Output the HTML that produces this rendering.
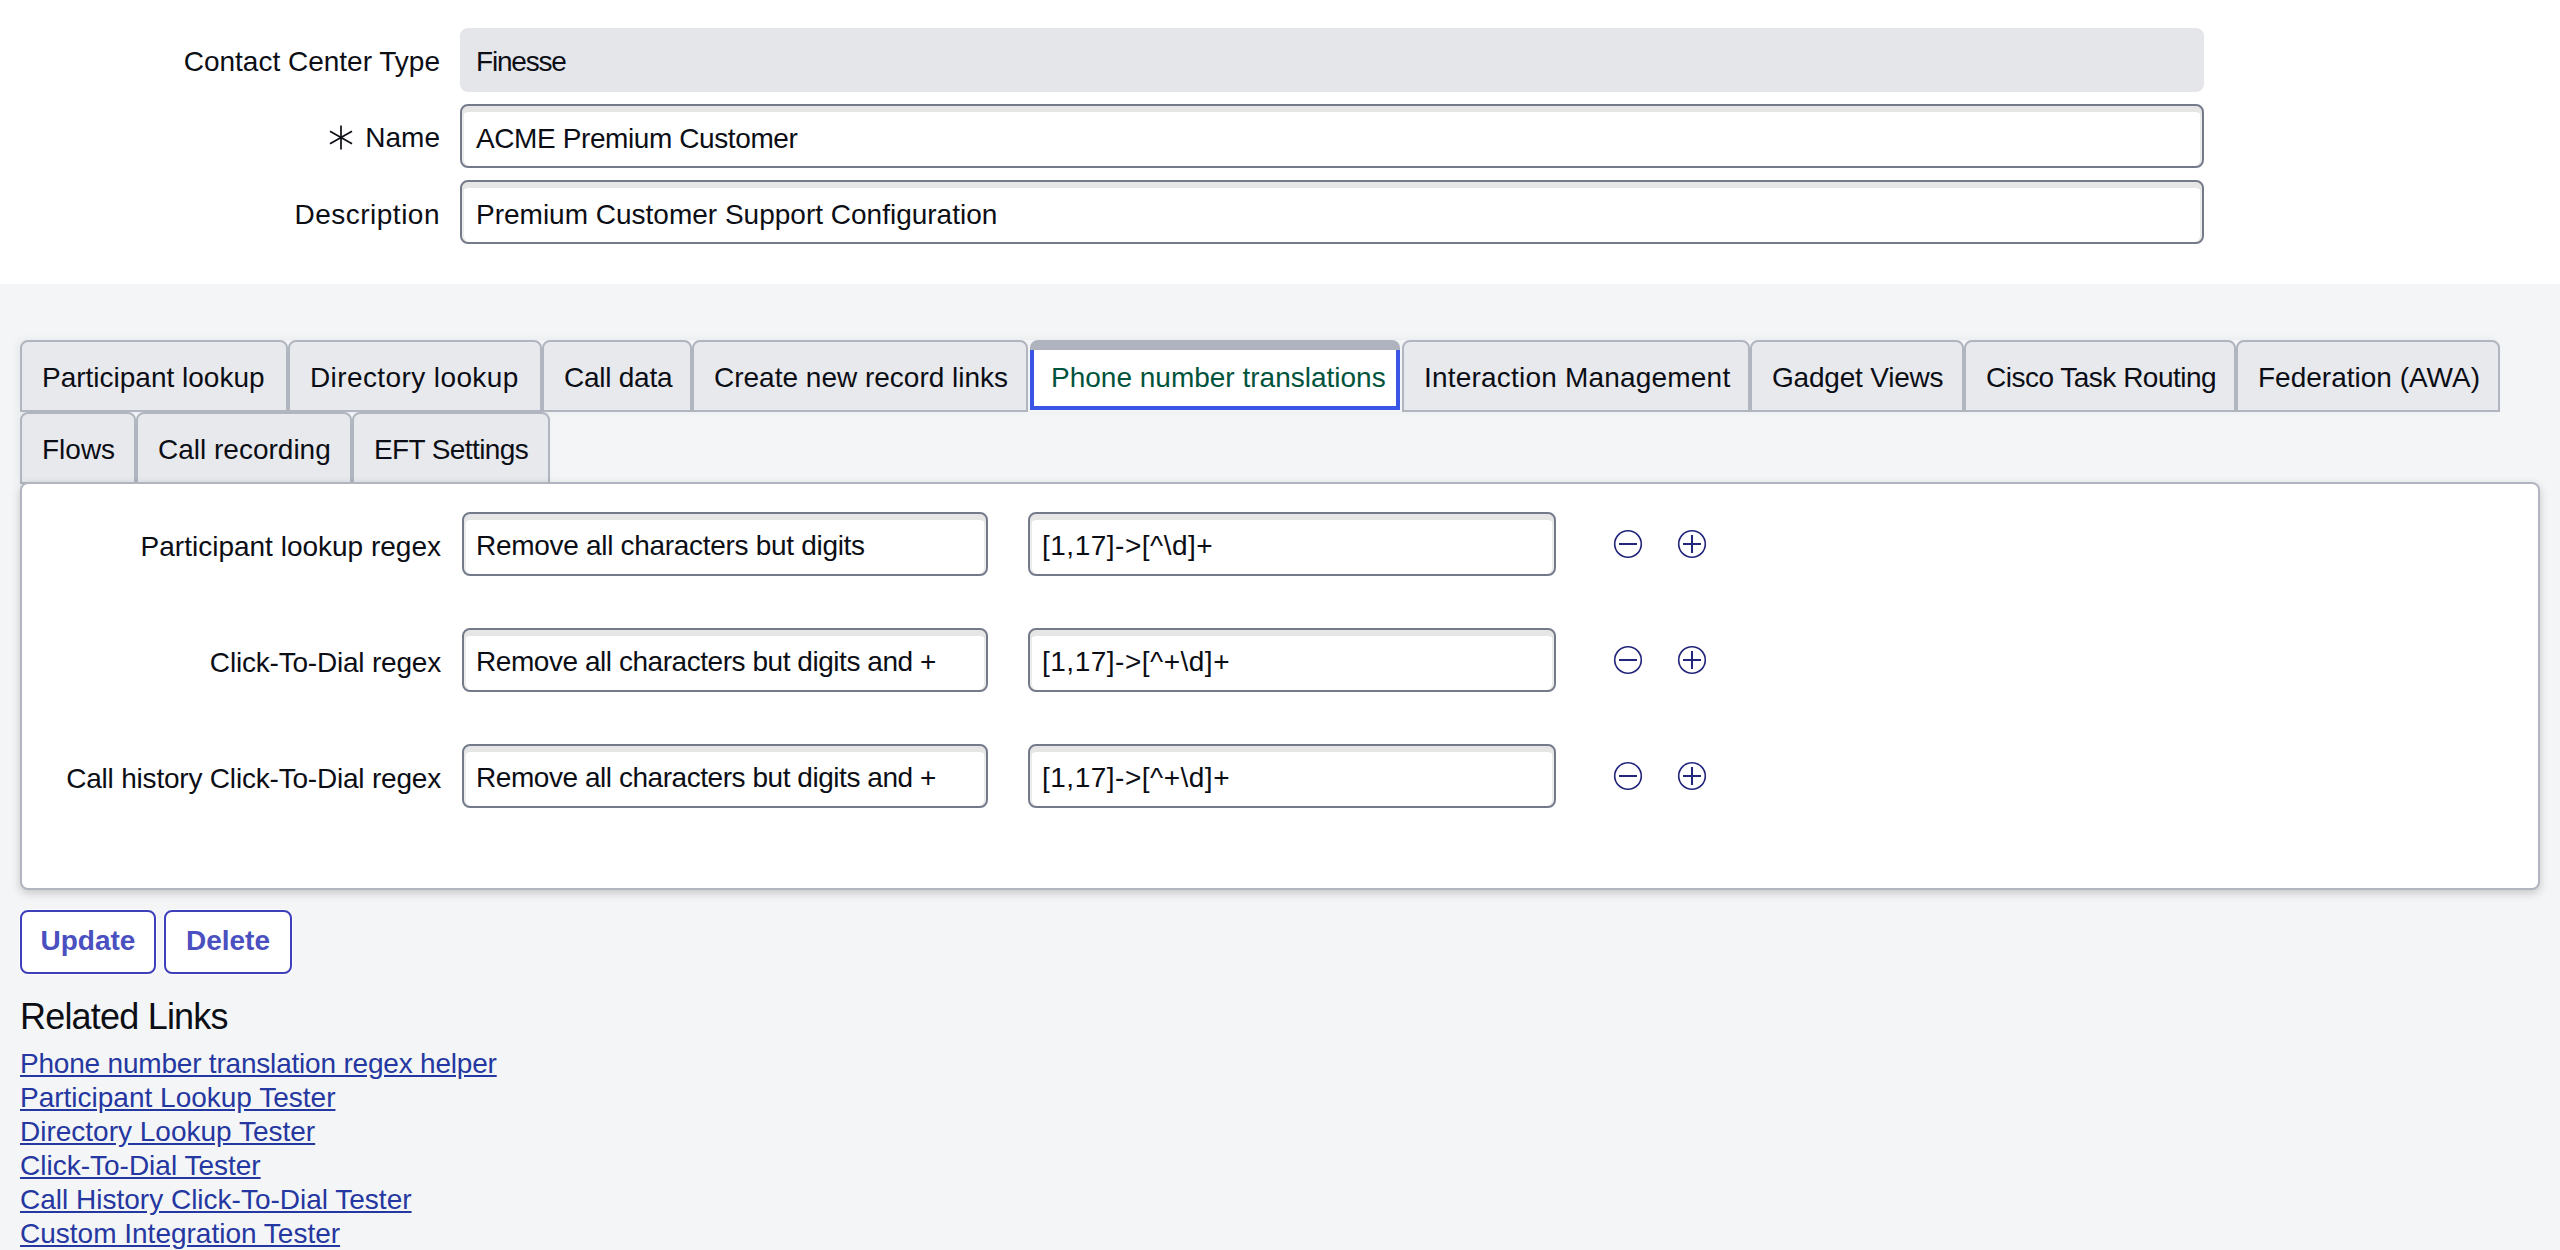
<!DOCTYPE html>
<html>
<head>
<meta charset="utf-8">
<style>
*{box-sizing:border-box;margin:0;padding:0}
html,body{width:2560px;height:1250px;overflow:hidden}
body{background:#f4f5f7;font-family:"Liberation Sans",sans-serif;font-size:28px;color:#0c0e15;position:relative}
.top{position:absolute;left:0;top:0;width:2560px;height:284px;background:#fff}
.lbl{position:absolute;right:0;white-space:nowrap;line-height:32px}
.inp{position:absolute;border:2px solid #737b8a;border-radius:8px;background:#fff;box-shadow:inset 0 6px 0 #e6e6e6,inset 2px 0 0 #ececec,inset -2px 0 0 #ececec;white-space:nowrap;line-height:32px}
.ro{position:absolute;background:#e5e6ea;border-radius:8px;white-space:nowrap;line-height:32px}
.tab{position:absolute;background:#e8e9ed;border:2px solid #b0b5bf;border-bottom:2px solid #b0b5bf;border-radius:8px 8px 0 0;white-space:nowrap;line-height:32px}
.panel{position:absolute;left:20px;top:482px;width:2520px;height:408px;background:#fff;border:2px solid #b0b5bf;border-radius:8px;box-shadow:0 3px 10px rgba(0,0,0,0.2)}
.ico{position:absolute;width:30px;height:30px}
.btn{position:absolute;border:2px solid #3d40b8;border-radius:8px;background:#fff;color:#4a50c0;box-shadow:0 0 0 1px #fff;font-weight:bold;white-space:nowrap;line-height:32px;text-align:center}
.h{position:absolute;left:20px;white-space:nowrap;font-size:36px;letter-spacing:-0.8px;line-height:40px;color:#0c0e15}
.lnk{position:absolute;left:20px;white-space:nowrap;color:#2537a0;text-decoration:underline;line-height:34px}
</style>
</head>
<body>
<div class="top"></div>

<!-- header fields -->
<div class="lbl" style="left:0;width:440px;top:46px;text-align:right">Contact Center Type</div>
<div class="ro" style="left:460px;top:28px;width:1744px;height:64px;padding:18px 0 0 16px;letter-spacing:-1.2px">Finesse</div>

<svg style="position:absolute;left:328px;top:124px" width="26" height="27" viewBox="0 0 26 27"><g stroke="#0c0e15" stroke-width="1.7"><line x1="13" y1="1.5" x2="13" y2="25.5"/><line x1="2" y1="7.2" x2="24" y2="19.8"/><line x1="2" y1="19.8" x2="24" y2="7.2"/></g></svg>
<div class="lbl" style="left:0;width:440px;top:122px;text-align:right">Name</div>
<div class="inp" style="left:460px;top:104px;width:1744px;height:64px;padding:17px 0 0 14px;letter-spacing:-0.4px">ACME Premium Customer</div>

<div class="lbl" style="left:0;width:440px;top:199px;text-align:right;letter-spacing:0.5px">Description</div>
<div class="inp" style="left:460px;top:180px;width:1744px;height:64px;padding:17px 0 0 14px">Premium Customer Support Configuration</div>

<div style="position:absolute;left:20px;top:340px;width:2480px;height:72px;border-radius:8px 8px 0 0;box-shadow:-3px -1px 8px rgba(0,0,0,0.05)"></div>
<div style="position:absolute;left:20px;top:412px;width:530px;height:72px;border-radius:8px 8px 0 0;box-shadow:-3px -1px 8px rgba(0,0,0,0.05)"></div>
<!-- tabs row 1 -->
<div class="tab" style="left:20px;top:340px;width:268px;height:72px;padding:20px 0 0 20px">Participant lookup</div>
<div class="tab" style="left:288px;top:340px;width:254px;height:72px;padding:20px 0 0 20px;letter-spacing:0.4px">Directory lookup</div>
<div class="tab" style="left:542px;top:340px;width:150px;height:72px;padding:20px 0 0 20px;letter-spacing:-0.25px">Call data</div>
<div class="tab" style="left:692px;top:340px;width:336px;height:72px;padding:20px 0 0 20px">Create new record links</div>
<div style="position:absolute;left:1030px;top:340px;width:370px;height:70px;background:#aeb3bd;border-radius:8px 8px 0 0"></div>
<div style="position:absolute;left:1030px;top:350px;width:370px;height:60px;background:#fff;border:4px solid #3b56e6;border-top:0"></div>
<div class="lbl" style="left:1051px;top:362px;color:#00543b">Phone number translations</div>
<div class="tab" style="left:1402px;top:340px;width:348px;height:72px;padding:20px 0 0 20px;letter-spacing:0.2px">Interaction Management</div>
<div class="tab" style="left:1750px;top:340px;width:214px;height:72px;padding:20px 0 0 20px;letter-spacing:-0.2px">Gadget Views</div>
<div class="tab" style="left:1964px;top:340px;width:272px;height:72px;padding:20px 0 0 20px;letter-spacing:-0.5px">Cisco Task Routing</div>
<div class="tab" style="left:2236px;top:340px;width:264px;height:72px;padding:20px 0 0 20px">Federation (AWA)</div>

<!-- tabs row 2 -->
<div class="tab" style="left:20px;top:412px;width:116px;height:72px;padding:20px 0 0 20px">Flows</div>
<div class="tab" style="left:136px;top:412px;width:216px;height:72px;padding:20px 0 0 20px">Call recording</div>
<div class="tab" style="left:352px;top:412px;width:198px;height:72px;padding:20px 0 0 20px;letter-spacing:-0.6px">EFT Settings</div>

<div class="panel"></div>


<!-- panel rows -->
<div class="lbl" style="left:0;width:441px;top:531px;text-align:right">Participant lookup regex</div>
<div class="inp" style="left:462px;top:512px;width:526px;height:64px;padding:16px 0 0 12px;letter-spacing:-0.3px">Remove all characters but digits</div>
<div class="inp" style="left:1028px;top:512px;width:528px;height:64px;padding:16px 0 0 12px;letter-spacing:0.5px">[1,17]-&gt;[^\d]+</div>
<svg class="ico" style="left:1613px;top:529px" viewBox="0 0 30 30"><circle cx="15" cy="15" r="13.3" fill="none" stroke="#22257a" stroke-width="1.6"/><line x1="6" y1="15" x2="24" y2="15" stroke="#22257a" stroke-width="2"/></svg>
<svg class="ico" style="left:1677px;top:529px" viewBox="0 0 30 30"><circle cx="15" cy="15" r="13.3" fill="none" stroke="#22257a" stroke-width="1.6"/><line x1="6" y1="15" x2="24" y2="15" stroke="#22257a" stroke-width="2"/><line x1="15" y1="6" x2="15" y2="24" stroke="#22257a" stroke-width="2"/></svg>

<div class="lbl" style="left:0;width:441px;top:647px;text-align:right;letter-spacing:-0.2px">Click-To-Dial regex</div>
<div class="inp" style="left:462px;top:628px;width:526px;height:64px;padding:16px 0 0 12px;letter-spacing:-0.45px">Remove all characters but digits and +</div>
<div class="inp" style="left:1028px;top:628px;width:528px;height:64px;padding:16px 0 0 12px;letter-spacing:0.5px">[1,17]-&gt;[^+\d]+</div>
<svg class="ico" style="left:1613px;top:645px" viewBox="0 0 30 30"><circle cx="15" cy="15" r="13.3" fill="none" stroke="#22257a" stroke-width="1.6"/><line x1="6" y1="15" x2="24" y2="15" stroke="#22257a" stroke-width="2"/></svg>
<svg class="ico" style="left:1677px;top:645px" viewBox="0 0 30 30"><circle cx="15" cy="15" r="13.3" fill="none" stroke="#22257a" stroke-width="1.6"/><line x1="6" y1="15" x2="24" y2="15" stroke="#22257a" stroke-width="2"/><line x1="15" y1="6" x2="15" y2="24" stroke="#22257a" stroke-width="2"/></svg>

<div class="lbl" style="left:0;width:441px;top:763px;text-align:right;letter-spacing:-0.2px">Call history Click-To-Dial regex</div>
<div class="inp" style="left:462px;top:744px;width:526px;height:64px;padding:16px 0 0 12px;letter-spacing:-0.45px">Remove all characters but digits and +</div>
<div class="inp" style="left:1028px;top:744px;width:528px;height:64px;padding:16px 0 0 12px;letter-spacing:0.5px">[1,17]-&gt;[^+\d]+</div>
<svg class="ico" style="left:1613px;top:761px" viewBox="0 0 30 30"><circle cx="15" cy="15" r="13.3" fill="none" stroke="#22257a" stroke-width="1.6"/><line x1="6" y1="15" x2="24" y2="15" stroke="#22257a" stroke-width="2"/></svg>
<svg class="ico" style="left:1677px;top:761px" viewBox="0 0 30 30"><circle cx="15" cy="15" r="13.3" fill="none" stroke="#22257a" stroke-width="1.6"/><line x1="6" y1="15" x2="24" y2="15" stroke="#22257a" stroke-width="2"/><line x1="15" y1="6" x2="15" y2="24" stroke="#22257a" stroke-width="2"/></svg>

<!-- buttons -->
<div class="btn" style="left:20px;top:910px;width:136px;height:64px;padding-top:13px">Update</div>
<div class="btn" style="left:164px;top:910px;width:128px;height:64px;padding-top:13px">Delete</div>

<!-- related links -->
<div class="h" style="top:997px">Related Links</div>
<div class="lnk" style="top:1047px;letter-spacing:-0.2px">Phone number translation regex helper</div>
<div class="lnk" style="top:1081px">Participant Lookup Tester</div>
<div class="lnk" style="top:1115px">Directory Lookup Tester</div>
<div class="lnk" style="top:1149px">Click-To-Dial Tester</div>
<div class="lnk" style="top:1183px">Call History Click-To-Dial Tester</div>
<div class="lnk" style="top:1217px">Custom Integration Tester</div>

</body>
</html>
